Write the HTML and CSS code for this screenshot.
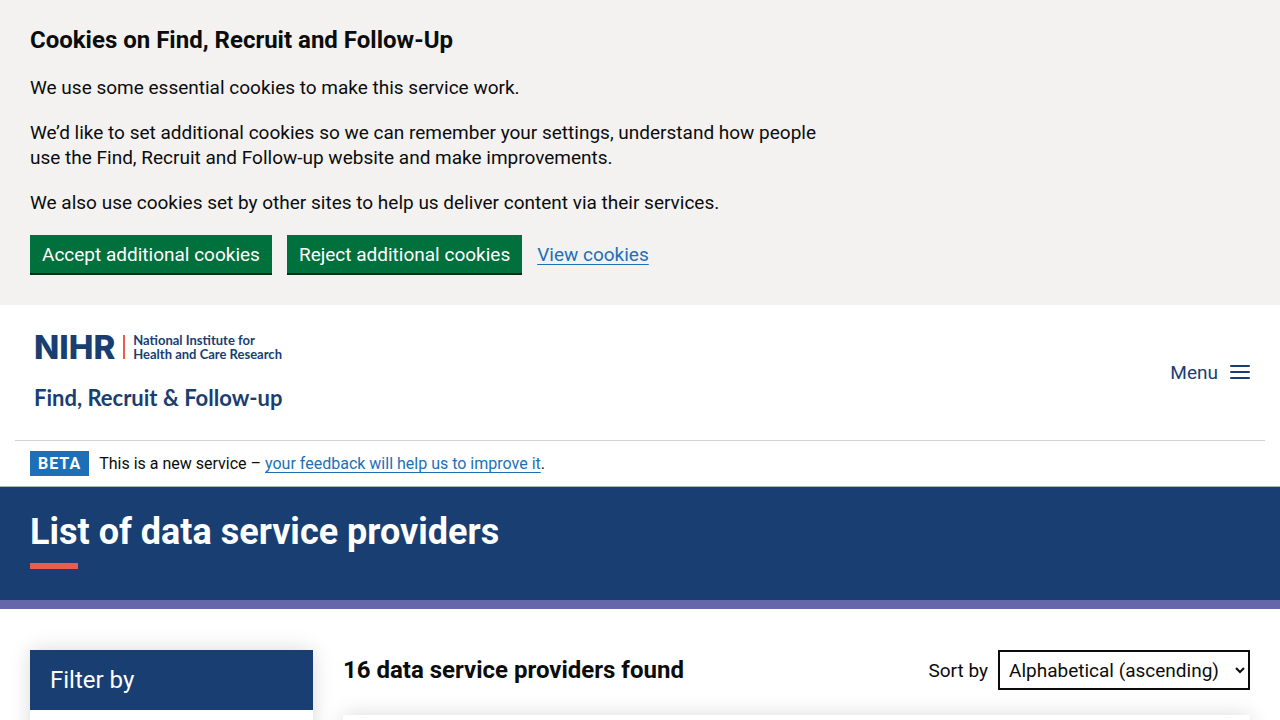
FILE: index.html
```html
<!DOCTYPE html>
<html lang="en">
<head>
<meta charset="utf-8">
<meta name="viewport" content="width=device-width, initial-scale=1">
<title>List of data service providers</title>
<link rel="stylesheet" href="styles.css">
</head>
<body>
<section class="cookies" aria-label="Cookies on Find, Recruit and Follow-Up">
  <div class="cookies-text">
    <h2 class="heading">Cookies on Find, Recruit and Follow-Up</h2>
    <p>We use some essential cookies to make this service work.</p>
    <p>We’d like to set additional cookies so we can remember your settings, understand how people use the Find, Recruit and Follow-up website and make improvements.</p>
    <p>We also use cookies set by other sites to help us deliver content via their services.</p>
  </div>
  <div class="cookies-actions">
    <button class="button" type="button">Accept additional cookies</button>
    <button class="button" type="button">Reject additional cookies</button>
    <a class="link" href="#">View cookies</a>
  </div>
</section>
<header class="header">
  <div class="header-bar">
    <a class="logo" href="#">
      <span class="logo-top">
        <span class="logo-mark">NIHR</span>
        <span class="logo-rule"></span>
        <span class="logo-name">National Institute for<br>Health and Care Research</span>
      </span>
      <span class="logo-service">Find, Recruit &amp; Follow-up</span>
    </a>
    <button class="menu" type="button">Menu
      <svg width="20" height="14" viewBox="0 0 20 14" aria-hidden="true"><path d="M1 1H19M1 7H19M1 13H19" stroke="currentColor" stroke-width="2" stroke-linecap="round"/></svg>
    </button>
  </div>
</header>
<div class="phase">
  <strong class="tag">BETA</strong>
  <span>This is a new service – <a class="link" href="#">your feedback will help us to improve it</a>.</span>
</div>
<div class="hero">
  <h1 class="hero-title">List of data service providers</h1>
</div>
<main class="content">
  <aside class="filters">
    <h2 class="filters-title">Filter by</h2>
    <div class="filters-body"></div>
  </aside>
  <div class="results">
    <div class="results-head">
      <h2 class="heading">16 data service providers found</h2>
      <div class="sort">
        <label for="sort">Sort by</label>
        <select class="select" id="sort"><option>Alphabetical (ascending)</option><option>Alphabetical (descending)</option></select>
      </div>
    </div>
    <article class="card"></article>
  </div>
</main>
</body>
</html>
```
FILE: styles.css
```css
* { box-sizing: border-box; }
body {
  margin: 0;
  background: #fff;
  color: #0b0c0c;
  font: 19px/25px Roboto, "Liberation Sans", sans-serif;
}
h1, h2, p { margin: 0; }
.heading { font-size: 24px; line-height: 30px; font-weight: 700; }
.link {
  color: #1d70b8;
  text-decoration: underline;
  text-decoration-thickness: 1px;
  text-underline-offset: 3px;
}
.cookies { padding: 25px 30px 30px; background: #f3f2f1; }
.cookies-text { display: grid; gap: 20px; max-width: 803px; }
.cookies-actions { display: flex; flex-wrap: wrap; align-items: baseline; gap: 15px; margin-top: 20px; }
.button {
  height: 40px;
  padding: 0 12px;
  border: 0;
  border-bottom: 2px solid #002d18;
  background: #00703c;
  color: #fff;
  font: inherit;
  cursor: pointer;
}
.header { margin: 0 15px; padding: 28px 15px 29px; border-bottom: 1px solid #d0d4d9; }
.header-bar { display: flex; align-items: center; justify-content: space-between; }
.logo {
  display: grid;
  gap: 24px;
  padding-left: 4px;
  color: #193e72;
  font-family: Lato, sans-serif;
  font-weight: 700;
  text-decoration: none;
}
.logo-top { display: flex; align-items: center; }
.logo-mark { font: 800 33px/25px Inter, sans-serif; }
.logo-rule { width: 2px; height: 24px; margin: 0 8px; background: #ea5d4e; }
.logo-name { font-size: 13px; line-height: 14px; }
.logo-service { font-size: 22px; line-height: 26px; }
.menu {
  display: flex;
  align-items: center;
  gap: 12px;
  padding: 0;
  border: 0;
  background: none;
  color: #193e72;
  font: inherit;
  cursor: pointer;
}
.phase {
  display: flex;
  align-items: center;
  gap: 10px;
  padding: 10px 30px;
  border-bottom: 1px solid #b1b4b6;
  font-size: 16px;
}
.tag { padding: 0 8px; background: #1d70b8; color: #fff; letter-spacing: 1px; }
.hero { padding: 20px 30px 31px; border-bottom: 9px solid #6667ab; background: #193e72; color: #fff; }
.hero-title { font-size: 36px; line-height: 50px; font-weight: 700; }
.hero-title::after { content: ""; display: block; width: 48px; height: 6px; margin-top: 6px; background: #ea5d4e; }
.content { display: grid; grid-template-columns: 283px 1fr; gap: 30px; padding: 41px 30px; }
.filters { box-shadow: 0 0 20px rgba(0, 0, 0, 0.15); }
.filters-title { padding: 15px 20px; background: #193e72; color: #fff; font-size: 24px; line-height: 30px; font-weight: 400; }
.filters-body { min-height: 400px; }
.results-head { display: flex; align-items: center; justify-content: space-between; margin-bottom: 25px; }
.sort { display: flex; align-items: center; gap: 10px; }
.select { width: 252px; height: 40px; padding: 5px; border: 2px solid #0b0c0c; border-radius: 0; background: #fff; color: #0b0c0c; font: inherit; }
.card { min-height: 240px; box-shadow: 0 0 20px rgba(0, 0, 0, 0.15); }
```
